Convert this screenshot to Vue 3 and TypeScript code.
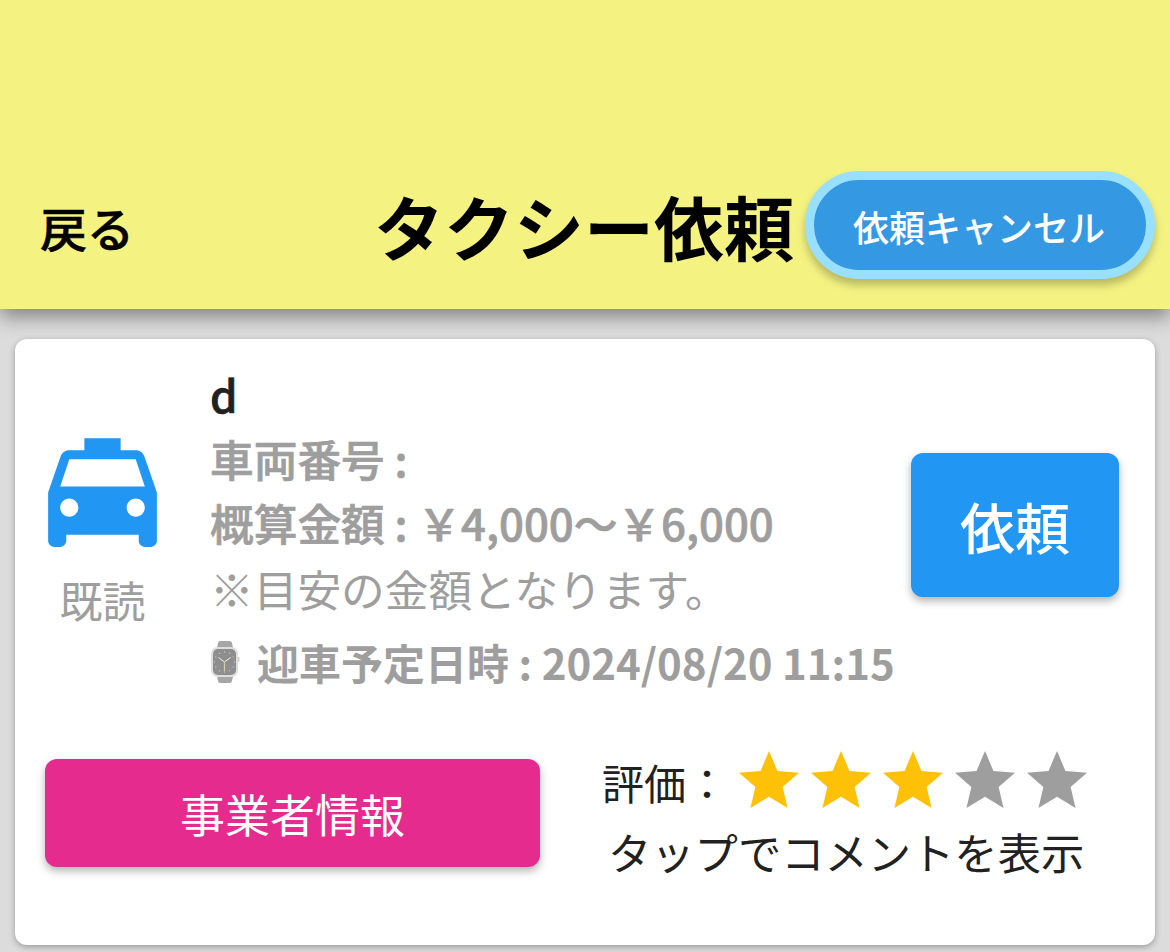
<script setup lang="ts">
const stars: boolean[] = [true, true, true, false, false]
const starPath = 'M12 17.27L18.18 21l-1.64-7.03L22 9.24l-7.19-.61L12 2 9.19 8.63 2 9.24l5.46 4.73L5.82 21z'
const ticks: number[] = [0, 30, 60, 90, 120, 150, 180, 210, 240, 270, 300, 330]
</script>

<template>
  <div class="page">
    <header class="bar">
      <span class="back">戻る</span>
      <h1 class="title">タクシー依頼</h1>
      <button class="cancel">依頼キャンセル</button>
    </header>
    <section class="card">
      <div class="top">
        <div class="status">
          <svg class="taxi" viewBox="0 0 24 24">
            <path d="M18.92 6.01C18.72 5.42 18.16 5 17.5 5H15V3H9v2H6.5c-.66 0-1.21.42-1.42 1.01L3 12v8c0 .55.45 1 1 1h1c.55 0 1-.45 1-1v-1h12v1c0 .55.45 1 1 1h1c.55 0 1-.45 1-1v-8l-2.08-5.99zM6.5 16c-.83 0-1.5-.67-1.5-1.5S5.67 13 6.5 13s1.5.67 1.5 1.5S7.33 16 6.5 16zm11 0c-.83 0-1.5-.67-1.5-1.5s.67-1.5 1.5-1.5 1.5.67 1.5 1.5-.67 1.5-1.5 1.5zM5 11l1.5-4.5h11L19 11H5z" />
          </svg>
          <span class="read">既読</span>
        </div>
        <div class="info">
          <div class="name">d</div>
          <div class="line">車両番号 :</div>
          <div class="line">概算金額 : ￥4,000～￥6,000</div>
          <div class="note">※目安の金額となります。</div>
          <div class="pickup">
            <svg class="watch" viewBox="0 0 30 42">
              <path d="M7 7l1-5q.4-2 2.400-2h9.200q2 0 2.400 2l1 5zM7 35l1 5q.4 2 2.400 2h9.200q2 0 2.400-2l1-5z" fill="#a6a6a6" />
              <rect x="1" y="6" width="27" height="30" rx="6.500" fill="#dedede" />
              <rect x="28" y="16" width="1.500" height="5" fill="#cfcfcf" />
              <rect x="3" y="8" width="23" height="26" rx="5" fill="#8e8e8e" />
              <circle v-for="t in ticks" :key="t" cx="14.500" cy="11" r=".7" fill="#c4c4c4" :transform="`rotate(${t} 14.500 21)`" />
              <path d="M14.500 21l-6-4.500M14.500 21l6-4.500" stroke="#efefef" stroke-width="1" fill="none" />
              <path d="M14.500 21v9" stroke="#d6c9a6" stroke-width="1.200" fill="none" />
            </svg>
            <span>迎車予定日時 : 2024/08/20 11:15</span>
          </div>
        </div>
        <button class="request">依頼</button>
      </div>
      <div class="bottom">
        <button class="company">事業者情報</button>
        <div class="rating">
          <div class="score">
            <span class="label">評価：</span>
            <svg v-for="(on, i) in stars" :key="i" class="star" viewBox="0 0 24 24">
              <path :d="starPath" :fill="on ? '#ffc107' : '#9e9e9e'" />
            </svg>
          </div>
          <div class="hint">タップでコメントを表示</div>
        </div>
      </div>
    </section>
  </div>
</template>

<style scoped>
.page {
  width: 1170px;
  height: 952px;
  overflow: hidden;
  background: #dcdcdc;
  font-family: "Noto Sans CJK JP", "Noto Sans", sans-serif;
  color: #212121;
}
.bar {
  height: 309px;
  box-sizing: border-box;
  background: #f4f382;
  box-shadow: 0 8px 18px rgba(0, 0, 0, 0.4);
  display: flex;
  align-items: flex-end;
  padding: 0 15px 30px 40px;
  position: relative;
}
.back {
  font-size: 47px;
  font-weight: 500;
  line-height: 58px;
  color: #000;
  margin-bottom: 23px;
  -webkit-text-stroke: 0.6px #000;
}
.title {
  margin: 0 11px 14px auto;
  font-size: 70px;
  font-weight: 700;
  line-height: 78px;
  color: #000;
}
.cancel {
  width: 350px;
  height: 108px;
  box-sizing: border-box;
  border: 9px solid #99e0ff;
  border-radius: 54px;
  background: #3498e3;
  color: #fff;
  font: 500 36px "Noto Sans CJK JP", sans-serif;
  padding: 2px 2px 0 0;
  box-shadow: 0 6px 9px rgba(0, 0, 0, 0.25);
}
.card {
  margin: 30px 15px 0;
  height: 606px;
  box-sizing: border-box;
  background: #fff;
  border-radius: 12px;
  box-shadow: 0 2px 6px rgba(0, 0, 0, 0.3);
  padding: 23px 36px 0 15px;
}
.top {
  display: flex;
}
.status {
  width: 180px;
  flex: none;
  padding-top: 58px;
  display: flex;
  flex-direction: column;
  align-items: flex-start;
}
.taxi {
  width: 145px;
  height: 145px;
  fill: #2196f3;
  display: block;
}
.read {
  width: 145px;
  text-align: center;
  font-size: 43px;
  line-height: 60px;
  color: #9e9e9e;
  margin-top: 4px;
}
.info {
  flex: 1;
  color: #9e9e9e;
  font-size: 43.700px;
  font-weight: 500;
  line-height: 64px;
}
.name,
.line {
  -webkit-text-stroke: 0.7px currentColor;
}
.name {
  color: #212121;
}
.note {
  font-weight: 400;
  line-height: 68px;
}
.pickup {
  display: flex;
  align-items: center;
  gap: 17px;
  margin-top: 8px;
  font-size: 42px;
  font-weight: 700;
}
.watch {
  width: 30px;
  height: 42px;
  flex: none;
}
.request {
  width: 208px;
  height: 144px;
  flex: none;
  margin-top: 91px;
  border: 0;
  padding: 0;
  border-radius: 12px;
  background: #2196f3;
  color: #fff;
  font: 500 55px "Noto Sans CJK JP", sans-serif;
  box-shadow: 0 4px 8px rgba(0, 0, 0, 0.3);
}
.bottom {
  display: flex;
  margin-top: 51px;
  padding-left: 15px;
}
.company {
  width: 495px;
  height: 108px;
  margin-top: 14px;
  border: 0;
  padding: 0;
  border-radius: 12px;
  background: #e62b8f;
  color: #fff;
  font: 400 45px "Noto Sans CJK JP", sans-serif;
  box-shadow: 0 4px 8px rgba(0, 0, 0, 0.3);
  flex: none;
}
.rating {
  margin-left: 62px;
  width: 495px;
  color: #212121;
}
.score {
  display: flex;
  align-items: center;
  height: 72px;
  font-size: 42px;
}
.label {
  width: 131px;
  flex: none;
}
.star {
  width: 72px;
  height: 72px;
  flex: none;
}
.hint {
  font-size: 43.300px;
  line-height: 62px;
  margin: 3px 0 0 6px;
}
</style>
